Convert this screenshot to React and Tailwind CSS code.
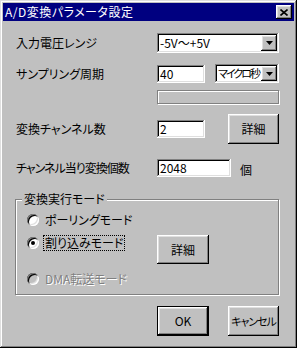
const RAISED = 'shadow-[inset_-1px_-1px_#000,inset_1px_1px_#fff,inset_-2px_-2px_#808080,inset_2px_2px_#dfdfdf]';
const SUNKEN = 'shadow-[inset_-1px_-1px_#fff,inset_1px_1px_#808080,inset_-2px_-2px_#dfdfdf,inset_2px_2px_#000]';

function Button({ children, className = '', isDefault = false }) {
  if (isDefault) {
    return (
      <div className={`border border-black bg-[#c0c0c0] whitespace-nowrap ${className}`}>
        <div className={`w-full h-full flex items-center justify-center ${RAISED}`}>{children}</div>
      </div>
    );
  }
  return (
    <div className={`bg-[#c0c0c0] flex items-center justify-center whitespace-nowrap ${RAISED} ${className}`}>{children}</div>
  );
}

function TextBox({ value, className = '' }) {
  return (
    <div className={`bg-white flex items-center pl-[3px] ${SUNKEN} ${className}`}>{value}</div>
  );
}

function Combo({ value, className = '', textClass = '' }) {
  return (
    <div className={`bg-white flex items-center p-[2px] ${SUNKEN} ${className}`}>
      <div className={`flex-1 pl-[1px] whitespace-nowrap overflow-hidden ${textClass}`}>{value}</div>
      <div className={`w-[16px] shrink-0 h-full bg-[#c0c0c0] flex items-center justify-center ${RAISED}`}>
        <svg width="7" height="4" viewBox="0 0 7 4">
          <polygon points="0,0 7,0 3.5,4" fill="#000" />
        </svg>
      </div>
    </div>
  );
}

function Radio({ checked = false, disabled = false, label, focused = false }) {
  return (
    <div className="flex items-center h-[16px]">
      <div
        className={`w-[12px] h-[12px] rounded-full flex items-center justify-center shadow-[inset_1px_1px_#808080,inset_-1px_-1px_#fff,inset_2px_2px_#000,inset_-2px_-2px_#dfdfdf] ${disabled ? 'bg-[#c0c0c0]' : 'bg-white'}`}
      >
        {checked && <div className="w-[4px] h-[4px] rounded-full bg-black" />}
      </div>
      <span
        className={`ml-[5px] px-px leading-[14px] ${focused ? 'outline outline-1 outline-dotted outline-black' : ''} ${disabled ? 'text-[#808080] [text-shadow:1px_1px_0_#fff]' : ''}`}
      >
        {label}
      </span>
    </div>
  );
}

export default function App() {
  return (
    <div
      className="w-[297px] h-[348px] bg-[#c0c0c0] p-[3px] text-[12px] text-black shadow-[inset_-1px_-1px_#000,inset_1px_1px_#dfdfdf,inset_-2px_-2px_#808080,inset_2px_2px_#fff] [font-feature-settings:'palt']"
      style={{ fontFamily: '"Noto Sans CJK JP", "Noto Sans", sans-serif' }}
    >
      {/* title bar */}
      <div className="h-[18px] bg-[#000080] flex items-center pl-[2px] pr-[2px]">
        <div className="flex-1 text-white leading-none tracking-[0.5px]">A/D変換パラメータ設定</div>
        <div className={`w-[16px] h-[14px] bg-[#c0c0c0] flex items-center justify-center ${RAISED}`}>
          <svg width="8" height="7" viewBox="0 0 8 7">
            <path d="M0.5 0.5 L7.5 6.5 M7.5 0.5 L0.5 6.5" stroke="#000" strokeWidth="1.6" />
          </svg>
        </div>
      </div>

      <div className="pl-[13px] flex flex-col">
        <div className="flex items-center h-[20px] mt-[12px]">
          <div className="w-[141px]">入力電圧レンジ</div>
          <Combo value="-5V〜+5V" className="w-[122px] h-[20px]" />
        </div>

        <div className="flex items-center h-[19px] mt-[11px]">
          <div className="w-[141px]">サンプリング周期</div>
          <TextBox value="40" className="w-[48px] h-[18px]" />
          <Combo value="マイクロ秒" textClass="tracking-[-2px] text-[11px]" className="w-[64px] h-[19px] ml-[10px]" />
        </div>

        <div className="flex h-[14px] mt-[7px]">
          <div className="w-[141px]" />
          <div className="w-[122px] h-[14px] border border-[#808080] shadow-[1px_1px_0_#fff,inset_1px_1px_0_#fff]" />
        </div>

        <div className="flex items-center h-[30px] mt-[10px]">
          <div className="w-[141px]">変換チャンネル数</div>
          <TextBox value="2" className="w-[48px] h-[18px]" />
          <Button className="w-[51px] h-[30px] ml-[23px]">詳細</Button>
        </div>

        <div className="flex items-center h-[18px] mt-[15px]">
          <div className="w-[141px] tracking-[-1px] whitespace-nowrap">チャンネル当り変換個数</div>
          <TextBox value="2048" className="w-[74px] h-[18px]" />
          <div className="ml-[9px] mt-[4px]">個</div>
        </div>

        {/* group box */}
        <div className="relative -ml-px mt-[22px] w-[264px] h-[96px] border border-[#808080] shadow-[1px_1px_0_#fff,inset_1px_1px_0_#fff] pl-[11px] pt-[12px]">
          <div className="absolute left-[6px] top-[-8px] px-[2px] bg-[#c0c0c0] leading-[14px]">変換実行モード</div>
          <Radio label="ポーリングモード" />
          <div className="flex h-[29px] mt-[7px]">
            <div className="w-[130px]">
              <Radio checked focused label="割り込みモード" />
            </div>
            <Button className="w-[52px] h-[29px]">詳細</Button>
          </div>
          <div className="mt-[7px]">
            <Radio disabled label="DMA転送モード" />
          </div>
        </div>

        <div className="flex mt-[11px] h-[30px]">
          <div className="w-[141px]" />
          <Button isDefault className="w-[52px] h-[30px]">OK</Button>
          <Button className="w-[51px] h-[30px] ml-[19px] text-[11px] tracking-[-1px]">キャンセル</Button>
        </div>
      </div>
    </div>
  );
}
